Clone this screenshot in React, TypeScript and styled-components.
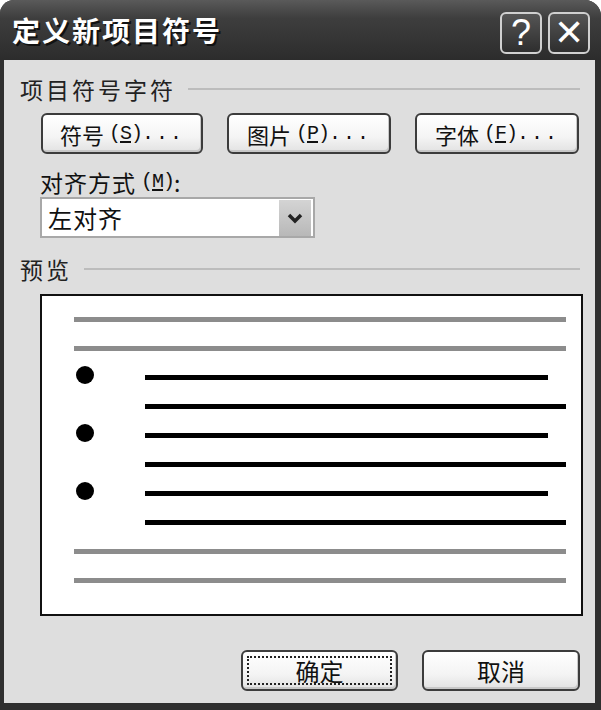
import React from 'react'
import styled, { createGlobalStyle } from 'styled-components'

const GlobalStyle = createGlobalStyle`
	html, body {
		margin: 0;
		padding: 0;
		background: #ffffff;
	}
	body {
		font-family: "Noto Sans CJK SC", "Liberation Sans", sans-serif;
	}
`

const Window = styled.div`
	width: 601px;
	height: 710px;
	box-sizing: border-box;
	display: flex;
	flex-direction: column;
	background: #2f2f2f;
	border-radius: 14px 16px 0 0;
	overflow: hidden;
`

const TitleBar = styled.div`
	height: 60px;
	flex-shrink: 0;
	display: flex;
	align-items: center;
	justify-content: space-between;
	padding: 0 11px 0 12px;
	background: linear-gradient(#5a5a5a 0%, #3e3e3e 30%, #2c2c2c 100%);
`

const Title = styled.div`
	color: #ffffff;
	font-size: 28px;
	font-weight: 700;
	letter-spacing: 2px;
	text-shadow: 2px 2px 0 #111111;
`

const TitleButtons = styled.div`
	display: flex;
	gap: 6px;
	margin-top: 6px;
`

const TitleButton = styled.div`
	width: 42px;
	height: 42px;
	box-sizing: border-box;
	border: 2px solid #d0d0d0;
	border-radius: 6px;
	background: linear-gradient(#555555, #2e2e2e);
	color: #ffffff;
	display: flex;
	align-items: center;
	justify-content: center;
	font-family: "Liberation Sans", sans-serif;
	font-size: 36px;
	line-height: 1;
`

const Body = styled.div`
	flex: 1;
	margin: 0 6px 7px 4px;
	background: #dedede;
	padding: 16px 15px 0 16px;
	display: flex;
	flex-direction: column;
`

const GroupHeader = styled.div<{ $top?: number }>`
	display: flex;
	align-items: center;
	gap: 12px;
	height: 26px;
	margin-top: ${p => p.$top || 0}px;
	font-size: 23px;
	letter-spacing: 3px;
	color: #222222;

	&::after {
		content: '';
		flex: 1;
		height: 2px;
		background: #bcbcbc;
	}
`

const ButtonRow = styled.div`
	display: flex;
	gap: 24px;
	margin: 11px 0 0 21px;
`

const PushButton = styled.div<{ $width: number; $size?: number }>`
	width: ${p => p.$width}px;
	height: 41px;
	box-sizing: border-box;
	border: 2px solid #3c3c3c;
	border-radius: 6px;
	background: linear-gradient(#ffffff 0%, #f4f4f4 60%, #e2e2e2 100%);
	box-shadow: inset -1px -2px 0 #c8c8c8;
	display: flex;
	align-items: center;
	justify-content: center;
	font-size: ${p => p.$size || 22}px;
	color: #111111;
	position: relative;
`

const Mnemonic = styled.span`
	font-family: "Liberation Mono", monospace;
	font-size: 20px;
	margin-left: 5px;
	letter-spacing: -1px;

	u {
		text-underline-offset: 2px;
	}
`

const Dots = styled.span`
	font-family: "Liberation Mono", monospace;
	font-size: 20px;
	letter-spacing: 2px;
`

const FocusRing = styled.div`
	position: absolute;
	inset: 4px;
	border: 2px dotted #222222;
	pointer-events: none;
`

const FieldLabel = styled.div`
	margin: 14px 0 0 20px;
	height: 27px;
	font-size: 23px;
	letter-spacing: 1px;
	color: #111111;
	display: flex;
	align-items: center;
`

const Select = styled.div`
	margin: 2px 0 0 20px;
	width: 275px;
	height: 41px;
	box-sizing: border-box;
	border: 2px solid #a8a8a8;
	background: #ffffff;
	display: flex;
	align-items: center;
	justify-content: space-between;
	padding: 0 2px 0 6px;
	font-size: 24px;
	letter-spacing: 1px;
	color: #111111;
`

const SelectArrow = styled.div`
	width: 32px;
	height: 36px;
	background: linear-gradient(#d4d4d4, #b8b8b8);
	display: flex;
	align-items: center;
	justify-content: center;
`

const Preview = styled.div`
	margin: 12px 0 0 20px;
	width: 543px;
	height: 322px;
	box-sizing: border-box;
	border: 2px solid #111111;
	background: #ffffff;
	padding: 9px 15px 0 32px;
	display: flex;
	flex-direction: column;
`

const PreviewRow = styled.div`
	height: 29px;
	display: flex;
	align-items: center;
`

const Rule = styled.div<{ $dark?: boolean; $short?: boolean }>`
	flex: 1;
	height: 5px;
	background: ${p => (p.$dark ? '#000000' : '#8c8c8c')};
	margin-right: ${p => (p.$short ? 18 : 0)}px;
`

const BulletCell = styled.div`
	width: 71px;
	display: flex;
	align-items: center;
`

const Bullet = styled.div`
	width: 18px;
	height: 18px;
	margin: -5px 0 0 2px;
	border-radius: 50%;
	background: #000000;
`

const Footer = styled.div`
	display: flex;
	justify-content: flex-end;
	gap: 24px;
	margin-top: 34px;
`

const previewRows = [
	{ kind: 'gray' },
	{ kind: 'gray' },
	{ kind: 'bullet' },
	{ kind: 'cont' },
	{ kind: 'bullet' },
	{ kind: 'cont' },
	{ kind: 'bullet' },
	{ kind: 'cont' },
	{ kind: 'gray' },
	{ kind: 'gray' },
]

const Chevron = () => (
	<svg width='16' height='12' viewBox='0 0 16 12'>
		<path d='M2 3 L8 9 L14 3' fill='none' stroke='#222222' strokeWidth='3.5' strokeLinejoin='miter' />
	</svg>
)

const ActionButton = ({ label, letter, width }) => (
	<PushButton $width={width}>
		{label}
		<Mnemonic>
			(<u>{letter}</u>)
		</Mnemonic>
		<Dots>...</Dots>
	</PushButton>
)

const App = () => {
	return (
		<>
			<GlobalStyle />
			<Window>
				<TitleBar>
					<Title>定义新项目符号</Title>
					<TitleButtons>
						<TitleButton>?</TitleButton>
						<TitleButton>✕</TitleButton>
					</TitleButtons>
				</TitleBar>

				<Body>
					<GroupHeader>项目符号字符</GroupHeader>

					<ButtonRow>
						<ActionButton label='符号' letter='S' width={162} />
						<ActionButton label='图片' letter='P' width={164} />
						<ActionButton label='字体' letter='F' width={164} />
					</ButtonRow>

					<FieldLabel>
						对齐方式
						<Mnemonic>
							(<u>M</u>)
						</Mnemonic>
						:
					</FieldLabel>

					<Select>
						左对齐
						<SelectArrow>
							<Chevron />
						</SelectArrow>
					</Select>

					<GroupHeader $top={18}>预览</GroupHeader>

					<Preview>
						{previewRows.map((row, i) => (
							<PreviewRow key={i}>
								{row.kind === 'gray' && <Rule />}
								{row.kind !== 'gray' && (
									<BulletCell>{row.kind === 'bullet' && <Bullet />}</BulletCell>
								)}
								{row.kind !== 'gray' && <Rule $dark $short={row.kind === 'bullet'} />}
							</PreviewRow>
						))}
					</Preview>

					<Footer>
						<PushButton $width={157} $size={24}>
							确定
							<FocusRing />
						</PushButton>
						<PushButton $width={158} $size={24}>
							取消
						</PushButton>
					</Footer>
				</Body>
			</Window>
		</>
	)
}

export default App
